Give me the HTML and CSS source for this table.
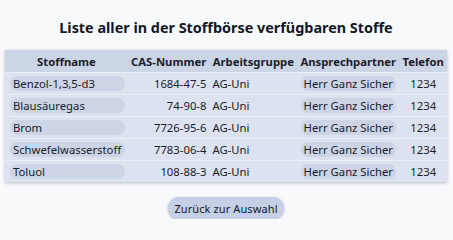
FILE: index.html
```html
<!DOCTYPE html>
<html lang="de">
<head>
<meta charset="utf-8">
<title>Stoffbörse</title>
<link rel="stylesheet" href="styles.css">
</head>
<body>
<main class="page">
  <h1 class="title">Liste aller in der Stoffbörse verfügbaren Stoffe</h1>
  <table class="list">
    <thead>
      <tr>
        <th>Stoffname</th>
        <th>CAS-Nummer</th>
        <th>Arbeitsgruppe</th>
        <th>Ansprechpartner</th>
        <th>Telefon</th>
      </tr>
    </thead>
    <tbody>
      <tr><td class="name"><span class="pill">Benzol-1,3,5-d3</span></td><td class="cas">1684-47-5</td><td class="ag">AG-Uni</td><td class="person"><span class="pill">Herr Ganz Sicher</span></td><td class="tel">1234</td></tr>
      <tr><td class="name"><span class="pill">Blausäuregas</span></td><td class="cas">74-90-8</td><td class="ag">AG-Uni</td><td class="person"><span class="pill">Herr Ganz Sicher</span></td><td class="tel">1234</td></tr>
      <tr><td class="name"><span class="pill">Brom</span></td><td class="cas">7726-95-6</td><td class="ag">AG-Uni</td><td class="person"><span class="pill">Herr Ganz Sicher</span></td><td class="tel">1234</td></tr>
      <tr><td class="name"><span class="pill">Schwefelwasserstoff</span></td><td class="cas">7783-06-4</td><td class="ag">AG-Uni</td><td class="person"><span class="pill">Herr Ganz Sicher</span></td><td class="tel">1234</td></tr>
      <tr><td class="name"><span class="pill">Toluol</span></td><td class="cas">108-88-3</td><td class="ag">AG-Uni</td><td class="person"><span class="pill">Herr Ganz Sicher</span></td><td class="tel">1234</td></tr>
    </tbody>
  </table>
  <div class="actions">
    <button class="back" type="button">Zurück zur Auswahl</button>
  </div>
</main>
</body>
</html>
```

FILE: styles.css
```css
html, body {
  margin: 0;
  padding: 0;
  background: #f8f9fb;
}
body {
  font-family: "Noto Sans", "Open Sans", sans-serif;
  color: #1a1d2c;
}
.page {
  padding: 17px 6px 0 5px;
}
.title {
  margin: 0 0 12px;
  font-size: 14.4px;
  font-weight: 700;
  text-align: center;
  line-height: 21px;
  color: #131726;
}
.list {
  width: 100%;
  border-collapse: collapse;
  font-size: 11.3px;
  background: #dce2f0;
  box-shadow: 0 1px 3px rgba(60, 70, 100, 0.35);
}
.list th {
  background: #ccd5e6;
  font-weight: 700;
  height: 22px;
  padding: 0 3px;
  white-space: nowrap;
  text-align: center;
}
.list td {
  height: 21px;
  padding: 0 3px;
  border-top: 1px solid #ebeef5;
  white-space: nowrap;
}
.list td.name { padding-left: 5px; }
.list td.cas { text-align: right; }
.list td.ag { text-align: left; }
.list td.person { text-align: center; }
.list td.tel { text-align: center; }
.pill {
  display: inline-block;
  background: #ccd4e6;
  border-radius: 8px;
  padding: 0 3px;
  line-height: 15px;
}
.name .pill {
  display: block;
}
.actions {
  display: flex;
  justify-content: center;
  margin-top: 15px;
}
.back {
  font-family: "Noto Sans", "Open Sans", sans-serif;
  font-size: 11px;
  letter-spacing: 0.1px;
  color: #131726;
  background: #c5d0e6;
  border: none;
  border-radius: 12px;
  padding: 0 6px;
  height: 22px;
  box-shadow: 0 1px 3px rgba(60, 70, 100, 0.35);
}
```
